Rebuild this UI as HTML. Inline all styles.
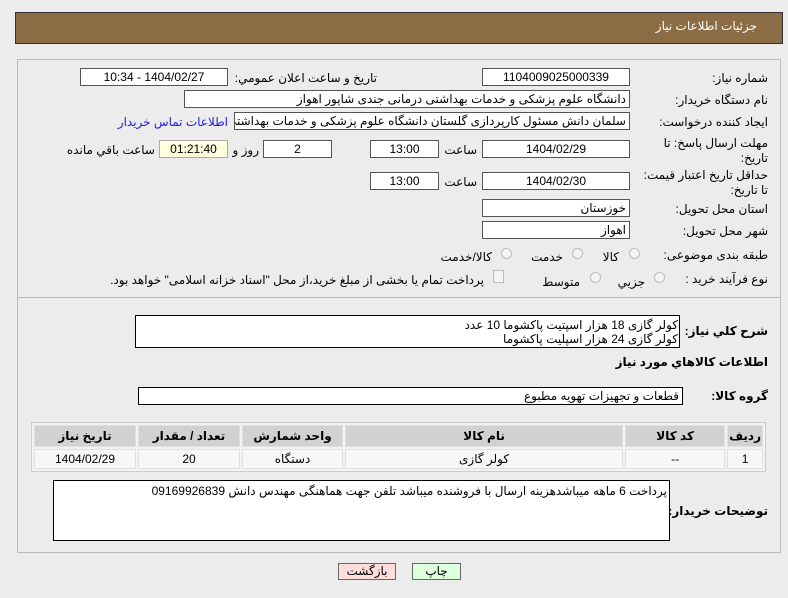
<!DOCTYPE html>
<html><head><meta charset="utf-8"><style>
body{margin:0;width:788px;height:598px;background:#ececec;font-family:"Liberation Sans","DejaVu Sans",sans-serif;font-size:12px;color:#000;position:relative;overflow:hidden}
.a{position:absolute;white-space:nowrap}
.lb{position:absolute;white-space:nowrap;direction:rtl;text-align:right}
.in{position:absolute;background:#fff;border:1px solid #555;box-sizing:border-box;height:18px;line-height:16px;text-align:center;direction:rtl;overflow:hidden;white-space:nowrap}
.n{font-size:12px}
.r{text-align:right;padding-right:3px}
.rad{position:absolute;width:11px;height:11px;border:1px solid #bbb;border-radius:50%;background:#f4f4f4;box-sizing:border-box}
th,td{border:1px solid #e0e0e0}
</style></head><body>
<div class="a" style="left:15px;top:12px;width:768px;height:32px;background:#8c6c44;border:1px solid #333;box-sizing:border-box"></div>
<div class="lb" style="right:31px;top:19px;color:#fff;font-size:12px">جزئیات اطلاعات نیاز</div>
<div class="a" style="left:17px;top:59px;width:764px;height:494px;border:1px solid #bbb;box-sizing:border-box"></div>
<div class="a" style="left:17px;top:297px;width:764px;height:1px;background:#bbb"></div>

<div class="lb" style="right:20px;top:71px">شماره نیاز:</div>
<div class="in n" style="left:482px;top:68px;width:148px">1104009025000339</div>
<div class="lb" style="right:411px;top:71px">تاریخ و ساعت اعلان عمومي:</div>
<div class="in n" style="left:80px;top:68px;width:148px">1404/02/27 - 10:34</div>

<div class="lb" style="right:20px;top:93px">نام دستگاه خریدار:</div>
<div class="in r" style="left:184px;top:90px;width:446px">دانشگاه علوم پزشکی و خدمات بهداشتی درمانی جندی شاپور اهواز</div>

<div class="lb" style="right:20px;top:115px">ایجاد کننده درخواست:</div>
<div class="in r" style="left:234px;top:112px;width:396px">سلمان دانش مسئول کارپردازی گلستان دانشگاه علوم پزشکی و خدمات بهداشتی</div>
<div class="lb" style="right:560px;top:115px;color:#2222dd">اطلاعات تماس خریدار</div>

<div class="lb" style="right:20px;top:136px;line-height:15px">مهلت ارسال پاسخ: تا<br>تاریخ:</div>
<div class="in n" style="left:482px;top:140px;width:148px">1404/02/29</div>
<div class="lb" style="right:311px;top:143px">ساعت</div>
<div class="in n" style="left:370px;top:140px;width:69px">13:00</div>
<div class="in n" style="left:263px;top:140px;width:69px">2</div>
<div class="lb" style="right:529px;top:143px">روز و</div>
<div class="in n" style="left:159px;top:140px;width:69px;background:#ffffe0;border-color:#aaa">01:21:40</div>
<div class="lb" style="right:633px;top:143px">ساعت باقي مانده</div>

<div class="lb" style="right:20px;top:168px;line-height:15px">حداقل تاریخ اعتبار قیمت:<br>تا تاریخ:</div>
<div class="in n" style="left:482px;top:172px;width:148px">1404/02/30</div>
<div class="lb" style="right:311px;top:175px">ساعت</div>
<div class="in n" style="left:370px;top:172px;width:69px">13:00</div>

<div class="lb" style="right:20px;top:202px">استان محل تحویل:</div>
<div class="in r" style="left:482px;top:199px;width:148px">خوزستان</div>
<div class="lb" style="right:20px;top:224px">شهر محل تحویل:</div>
<div class="in r" style="left:482px;top:221px;width:148px">اهواز</div>

<div class="lb" style="right:20px;top:248px">طبقه بندی موضوعی:</div>
<div class="rad" style="left:629px;top:248px"></div><div class="lb" style="right:169px;top:250px">کالا</div>
<div class="rad" style="left:572px;top:248px"></div><div class="lb" style="right:225px;top:250px">خدمت</div>
<div class="rad" style="left:501px;top:248px"></div><div class="lb" style="right:296px;top:250px">کالا/خدمت</div>

<div class="lb" style="right:20px;top:272px">نوع فرآیند خرید :</div>
<div class="rad" style="left:654px;top:272px"></div><div class="lb" style="right:143px;top:275px">جزيي</div>
<div class="rad" style="left:590px;top:272px"></div><div class="lb" style="right:208px;top:275px">متوسط</div>
<div class="a" style="left:493px;top:270px;width:9px;height:11px;border:1px solid #bbb;background:#f4f4f4"></div>
<div class="lb" style="right:304px;top:273px">پرداخت تمام یا بخشی از مبلغ خرید،از محل "اسناد خزانه اسلامی" خواهد بود.</div>

<div class="lb" style="right:20px;top:324px;font-weight:bold">شرح کلي نیاز:</div>
<div class="a" style="left:135px;top:315px;width:545px;height:33px;background:#fff;border:1px solid #000;box-sizing:border-box"></div>
<div class="lb" style="right:110px;top:318px;line-height:14px">کولر گازی 18 هزار اسپتیت پاکشوما 10 عدد<br>کولر گازی 24 هزار اسپلیت پاکشوما</div>
<div class="lb" style="right:20px;top:355px;font-weight:bold">اطلاعات کالاهاي مورد نیاز</div>

<div class="lb" style="right:20px;top:389px;font-weight:bold">گروه کالا:</div>
<div class="in r" style="left:138px;top:387px;width:545px;border-color:#000">قطعات و تجهیزات تهویه مطبوع</div>

<table style="position:absolute;left:31px;top:422px;width:735px;border-collapse:separate;border-spacing:2px;border:1px solid #ccc;background:#f2f2f2;direction:rtl;text-align:center;font-size:12px">
<tr style="background:#d1d1d1;height:22px;font-weight:bold"><th style="width:22px">ردیف</th><th style="width:96px">کد کالا</th><th>نام کالا</th><th style="width:97px">واحد شمارش</th><th style="width:98px">تعداد / مقدار</th><th style="width:98px">تاریخ نیاز</th></tr>
<tr style="background:#f7f7f7;height:20px"><td>1</td><td>--</td><td>کولر گازی</td><td>دستگاه</td><td>20</td><td>1404/02/29</td></tr>
</table>

<div class="lb" style="right:20px;top:504px;font-weight:bold">توضیحات خریدار:</div>
<div class="a" style="left:53px;top:480px;width:617px;height:61px;background:#fff;border:1px solid #000;box-sizing:border-box"></div>
<div class="lb" style="right:121px;top:484px">پرداخت 6 ماهه میباشدهزینه ارسال با فروشنده میباشد تلفن جهت هماهنگی مهندس دانش 09169926839</div>

<div class="a" style="left:338px;top:563px;width:58px;height:17px;background:#fdd;border:1px solid #666;box-sizing:border-box;text-align:center;line-height:15px">بازگشت</div>
<div class="a" style="left:412px;top:563px;width:49px;height:17px;background:#dfd;border:1px solid #666;box-sizing:border-box;text-align:center;line-height:15px">چاپ</div>
</body></html>
